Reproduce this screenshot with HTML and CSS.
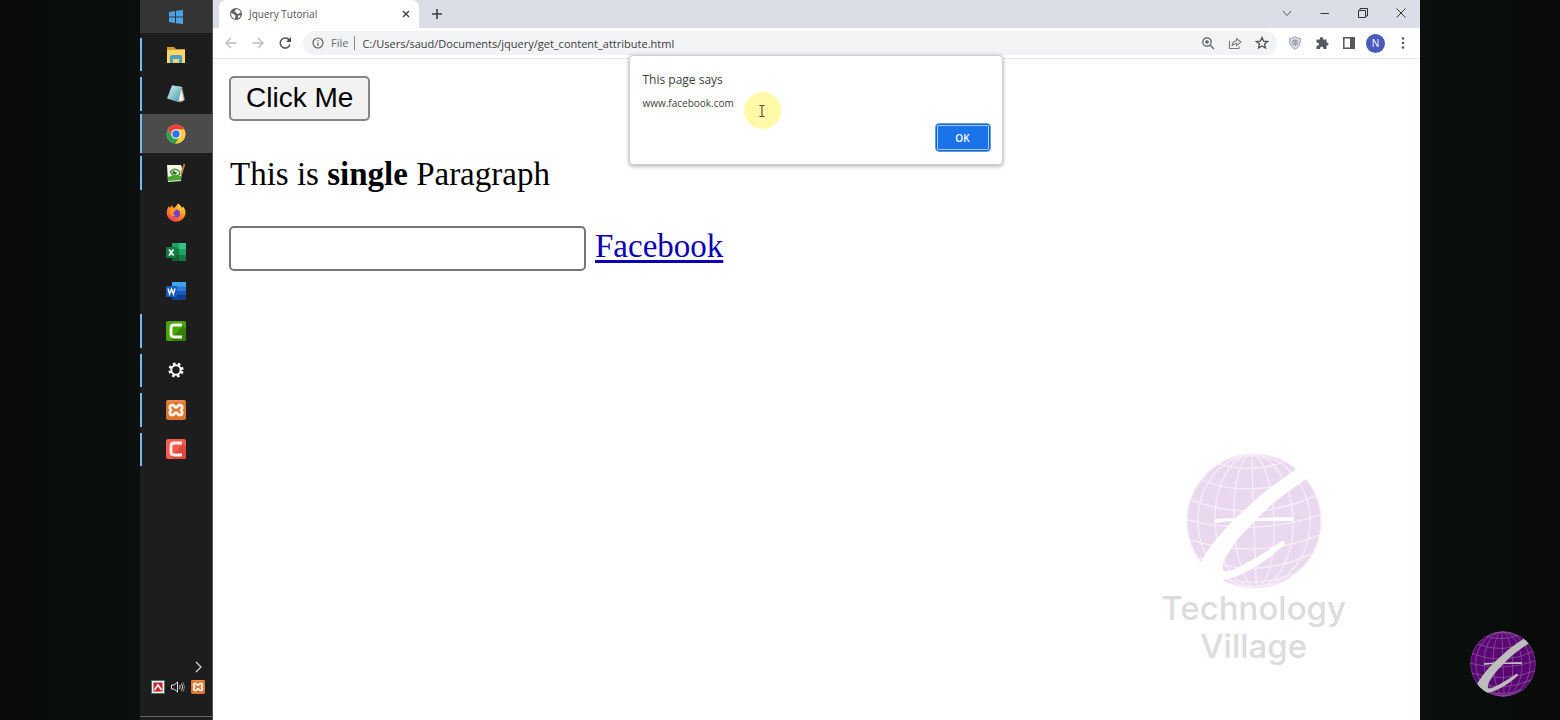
FILE: index.html
```html
<!DOCTYPE html>
<html lang="en">
<head>
<meta charset="utf-8">
<title>Jquery Tutorial</title>
<link rel="stylesheet" href="styles.css">
</head>
<body>
<svg class="defs" aria-hidden="true">
  <defs>
    <clipPath id="disc"><circle cx="68" cy="68" r="67.500"/></clipPath>
    <linearGradient id="pane" x1="0" y1="0" x2="1" y2="1"><stop offset="0" stop-color="#d9f1f5"/><stop offset="1" stop-color="#3e97a8"/></linearGradient>
    <linearGradient id="fox" x1="0.8" y1="0" x2="0.2" y2="1"><stop offset="0" stop-color="#ffe04a"/><stop offset="0.5" stop-color="#ff8a1f"/><stop offset="1" stop-color="#f5305e"/></linearGradient>
    <symbol id="globe" viewBox="0 0 136 136">
      <g clip-path="url(#disc)">
        <circle class="globe-fill" cx="68" cy="68" r="67.500"/>
        <g class="globe-lines" fill="none">
          <circle cx="68" cy="68" r="67"/>
          <g transform="rotate(-2 68 68)">
            <path d="M68 1V135"/>
            <ellipse cx="68" cy="68" rx="20" ry="66"/>
            <ellipse cx="68" cy="68" rx="39" ry="66"/>
            <ellipse cx="68" cy="68" rx="56" ry="66"/>
            <path d="M34 9Q68 22 102 9M16 25Q68 47 120 25M4 44Q68 72 132 44M0 64Q68 84 136 64M2 84Q68 108 134 84M12 103Q68 127 124 103M28 122Q68 136 108 122"/>
          </g>
        </g>
        <path class="globe-mark" d="M112 15C96 26 78 38 65 51C50 64 36 78 25 93C20 100 16 106 13 113L20 136L37 127C50 125 65 117 80 107Q91 99 99 91Q99 88 96 88C86 95 70 105 57 112C48 117 42 119 38 118C35 114 38 106 43 99C49 89 55 82 63 74C72 64 80 56 90 48C100 40 110 33 122 25Z"/>
        <path class="globe-mark" d="M30 66C40 65 55 65 70 65L106 64Q109 66 106 68L70 68Q45 67 30 70Q27 68 30 66Z"/>
      </g>
    </symbol>
    <symbol id="xampp" viewBox="0 0 20 20">
      <rect width="20" height="20" rx="2" fill="#dd7431"/><path d="M1 1H19" stroke="#f2a46c"/>
      <path d="M6.500 5C3.500 5 3 7.500 5 10C3 12.500 3.500 15 6.500 15C8.500 15 8.500 12.500 10 12.500S11.500 15 13.500 15C16.500 15 17 12.500 15 10C17 7.500 16.500 5 13.500 5C11.500 5 11.500 7.500 10 7.500S8.500 5 6.500 5Z" fill="none" stroke="#fff1e2" stroke-width="2.800"/>
    </symbol>
  </defs>
</svg>

<div class="stage">
  <nav class="taskbar" aria-label="Taskbar">
    <button class="start" aria-label="Start">
      <svg class="i16" viewBox="0 0 16 16"><path fill="#4aa3e8" d="M1 3L7 2V7.500H1ZM8 1.800L15 1V7.500H8ZM1 8.500H7V14L1 13ZM8 8.500H15V15L8 14.200Z"/></svg>
    </button>
    <div class="apps">
      <button class="app open" aria-label="File Explorer"><svg class="i20" viewBox="0 0 20 20"><path fill="#d99a2b" d="M1 2H8L10 4H19V8H1Z"/><path fill="#fbd769" d="M1 5H19V18H1Z"/><path fill="#4b9ec4" d="M4 18V12Q4 10 6 10H14Q16 10 16 12V18H13V14H7V18Z"/></svg></button>
      <button class="app open" aria-label="Notepad"><svg class="i20" viewBox="0 0 20 20"><path fill="#8b7f6c" d="M16 2L19 16L14 19Z"/><path fill="#f0eee7" d="M15 3L18 16L12 18Z"/><path fill="url(#pane)" d="M6 1.500L16 3L12 18L1 14.500Z"/><path d="M6 2L16 3.500" stroke="#c3d4d6"/></svg></button>
      <button class="app open active" aria-label="Chrome"><svg class="i20" viewBox="0 0 20 20"><circle cx="10" cy="10" r="9.500" fill="#ffcd40"/><path fill="#e94335" d="M1.800 5.200A9.500 9.500 0 0 1 18.200 5.200L18.300 5.500H10L6 12.300Z"/><path fill="#31a350" d="M1.800 5.200L6 12.300L10 14.500H14L9.200 19.500A9.500 9.500 0 0 1 1.800 5.200Z"/><path fill="#ffcd40" d="M18.200 5.500A9.500 9.500 0 0 1 9.500 19.500L14 12.500L12.500 5.500Z"/><circle cx="10" cy="10" r="4.800" fill="#fff"/><circle cx="10" cy="10" r="3.700" fill="#2f74e8"/></svg></button>
      <button class="app open" aria-label="Notepad++"><svg class="i20" viewBox="0 0 20 20"><path fill="#f3f6ec" d="M1 2L15 2L16 5L15 18L2 19Z"/><path fill="#48a52e" d="M2 14Q8 11 15 13L15 17L2 18Z"/><path d="M4 9Q8 4 13 8Q15 13 10 12.500Q6 12.500 5 10H11" fill="none" stroke="#4f9f36" stroke-width="1.600"/><path d="M7 8L10 11" stroke="#22472a" stroke-width="1.500"/><path d="M18.500 1L15 12" stroke="#bd8734" stroke-width="1.800"/></svg></button>
      <button class="app" aria-label="Firefox"><svg class="i20" viewBox="0 0 20 20"><path fill="url(#fox)" d="M12 0.500Q15 2 16 5L17 3.500Q20 7 19.500 11A9.600 9.600 0 0 1 .5 10Q.5 6 3 3L4 5L6 2Q6 4 8 5Q10 4 12 .5Z"/><circle cx="10" cy="10.500" r="4" fill="#7541c9"/><path fill="#ff9b28" d="M4 7Q7 5 10 7.500L7.500 9Q7 12 10 13Q5 14 4 10Z"/><path fill="#ffbb2d" d="M12 3Q17 6 15.500 11Q15 7 11 6Z"/></svg></button>
      <button class="app" aria-label="Excel"><svg class="i20" viewBox="0 0 20 20"><path fill="#21a366" d="M6 1H20V19H6Z"/><path fill="#33c481" d="M13 1H20V7H13Z"/><path fill="#107c41" d="M6 7H13V13H6ZM13 13H20V19H13Z"/><path fill="#185c37" d="M6 13H13V19H6Z"/><rect y="5" width="11" height="11" rx="1" fill="#107c41"/><path d="M3 7.500L7.500 13.500M7.500 7.500L3 13.500" stroke="#fff" stroke-width="1.700"/></svg></button>
      <button class="app" aria-label="Word"><svg class="i20" viewBox="0 0 20 20"><path fill="#41a5ee" d="M6 1H20V6H6Z"/><path fill="#2b7cd3" d="M6 5.500H20V10H6Z"/><path fill="#185abd" d="M6 10H20V14.500H6Z"/><path fill="#103f91" d="M6 14.500H20V19H6Z"/><rect y="5" width="11" height="11" rx="1" fill="#185abd"/><path d="M2 7.500L3.600 13L5.500 8L7.400 13L9 7.500" fill="none" stroke="#fff" stroke-width="1.400"/></svg></button>
      <button class="app open" aria-label="Camtasia"><svg class="i20" viewBox="0 0 20 20"><rect width="20" height="20" rx="2" fill="#4ba407"/><path fill="#367f05" d="M5 18L17 5L20 8V18Q20 20 18 20H7Z"/><path d="M16 4H8Q5 4 5 7V13Q5 16 8 16H16" fill="none" stroke="#f2faea" stroke-width="2.800"/></svg></button>
      <button class="app open" aria-label="Settings"><svg class="i20" viewBox="0 0 20 20" fill="none" stroke="#fff"><circle cx="10" cy="10" r="4.700" stroke-width="2"/><circle cx="10" cy="10" r="6.300" stroke-width="2.600" stroke-dasharray="2.475 2.475" transform="rotate(11 10 10)"/></svg></button>
      <button class="app open" aria-label="XAMPP"><svg class="i20"><use href="#xampp"/></svg></button>
      <button class="app open" aria-label="Camtasia Recorder"><svg class="i20" viewBox="0 0 20 20"><rect width="20" height="20" rx="2" fill="#f65a50"/><path fill="#dc473f" d="M5 18L17 5L20 8V18Q20 20 18 20H7Z"/><path d="M16 4H8Q5 4 5 7V13Q5 16 8 16H16" fill="none" stroke="#fff0ec" stroke-width="2.800"/></svg></button>
    </div>
    <div class="tray">
      <button class="tray-more" aria-label="Show hidden icons"><svg class="i14" viewBox="0 0 14 14" fill="none" stroke="#ddd" stroke-width="1.200"><path d="M5 2L10 7L5 12"/></svg></button>
      <div class="tray-row">
        <button aria-label="Antivirus"><svg class="i14" viewBox="0 0 14 14"><rect x=".5" y=".5" width="13" height="13" fill="#eee" stroke="#41785d"/><rect x="2.500" y="2.500" width="9" height="9" fill="#c7212c"/><path d="M3.500 10L7 5L10.500 10" fill="none" stroke="#fff" stroke-width="1.600"/></svg></button>
        <button aria-label="Volume"><svg class="i14" viewBox="0 0 14 14" fill="none" stroke="#ddd"><path d="M.5 5H3L6.500 2V12L3 9H.5Z"/><path d="M8.500 5Q10 7 8.500 9M10.500 3.500Q13 7 10.500 10.500"/><path d="M12 2Q15 7 12 12" stroke="#777"/></svg></button>
        <button aria-label="XAMPP control"><svg class="i14"><use href="#xampp"/></svg></button>
      </div>
    </div>
  </nav>

  <div class="browser">
    <header class="tabstrip">
      <div class="tab">
        <svg class="i12" viewBox="0 0 12 12"><circle cx="6" cy="6" r="6" fill="#5f6368"/><path fill="#fff" d="M1 5Q3 5 4 6.500Q6 7 5.500 8.500Q4.500 9 5 11Q1 10 1 5ZM6 1Q9.500 1 10.800 4.500Q9 4.500 8.500 6Q6 6 6.500 4.500Q4 4 5 2.500Q6 2.500 6 1ZM8 8Q9 7 10.500 7.500Q10 9.500 8 10.500Z"/></svg>
        <span class="tab-title">Jquery Tutorial</span>
        <button aria-label="Close tab"><svg class="i10" viewBox="0 0 10 10" stroke="#3c4043" stroke-width="1.400"><path d="M2 2L8 8M8 2L2 8"/></svg></button>
      </div>
      <button class="new-tab" aria-label="New tab"><svg class="i12" viewBox="0 0 12 12" stroke="#3c4043" stroke-width="1.600"><path d="M1 6H11M6 1V11"/></svg></button>
      <div class="window-buttons">
        <button aria-label="Search tabs"><svg class="i12" viewBox="0 0 12 12" fill="none" stroke="#555"><path d="M2 4L6 8.500L10 4"/></svg></button>
        <button aria-label="Minimize"><svg class="i12" viewBox="0 0 12 12" stroke="#333"><path d="M1.500 6.500H10"/></svg></button>
        <button aria-label="Restore"><svg class="i12" viewBox="0 0 12 12" fill="none" stroke="#333"><path d="M1.500 3.500H8.500V10.500H1.500ZM3 3V1.500H10.500V9H9"/></svg></button>
        <button aria-label="Close"><svg class="i12" viewBox="0 0 12 12" stroke="#333"><path d="M1.500 1.500L10.500 10.500M10.500 1.500L1.500 10.500"/></svg></button>
      </div>
    </header>

    <div class="toolbar">
      <div class="tools">
        <button aria-label="Back"><svg class="i14" viewBox="0 0 14 14" fill="none" stroke="#babcbe" stroke-width="1.300"><path d="M12.500 7H2M7 2L2 7L7 12"/></svg></button>
        <button aria-label="Forward"><svg class="i14" viewBox="0 0 14 14" fill="none" stroke="#babcbe" stroke-width="1.300"><path d="M1.500 7H12M7 2L12 7L7 12"/></svg></button>
        <button aria-label="Reload"><svg class="i14" viewBox="0 0 14 14"><path d="M11.500 4.500A5 5 0 1 0 12 8.500" fill="none" stroke="#4d5155" stroke-width="1.500"/><path fill="#4d5155" d="M13 1V6H8Z"/></svg></button>
      </div>
      <div class="omnibox">
        <svg class="i12" viewBox="0 0 12 12" fill="none" stroke="#5f6368" stroke-width="1.200"><circle cx="6" cy="6" r="5"/><path d="M6 5.500V9M6 3V4.300"/></svg>
        <span class="scheme">File</span>
        <input class="url" aria-label="Address" value="C:/Users/saud/Documents/jquery/get_content_attribute.html">
        <div class="tools">
          <button aria-label="Zoom"><svg class="i14" viewBox="0 0 14 14" fill="none" stroke="#5f6368" stroke-width="1.300"><circle cx="6" cy="6" r="4.200"/><path d="M9 9L13 13M4 6H8M6 4V8"/></svg></button>
          <button aria-label="Share"><svg class="i14" viewBox="0 0 14 14" fill="none" stroke="#777b80" stroke-width="1.100"><path d="M1.500 5V12.500H11V10.500M4 10Q4.500 5 8.500 5V2.500L13 6L8.500 9.500V7.500Q5.500 7.500 4 10Z"/></svg></button>
          <button aria-label="Bookmark"><svg class="i14" viewBox="0 0 14 14" fill="none" stroke="#4d5155" stroke-width="1.300"><path d="M7 1.500L8.600 5.200L12.600 5.500L9.500 8.100L10.500 12L7 9.900L3.500 12L4.500 8.100L1.400 5.500L5.400 5.200Z"/></svg></button>
        </div>
      </div>
      <div class="tools">
        <button aria-label="Shield extension"><svg class="i14" viewBox="0 0 14 14"><path d="M7 .8Q10 2.500 12.500 2.500Q13 10 7 13.500Q1 10 1.500 2.500Q4 2.500 7 .8Z" fill="#d9dbe2" stroke="#a3a6af"/><circle cx="7" cy="6.500" r="2.600" fill="#c3c6d1" stroke="#9498a5"/><path d="M7 4V9" stroke="#858998"/></svg></button>
        <button aria-label="Extensions"><svg class="i14" viewBox="0 0 14 14"><path fill="#55585c" d="M1.500 3.500H5Q4.500 1 6.500 1T8 3.500H11.500V6.500Q13.500 6 13.500 8T11.500 9.500V13H8.500Q8.500 10.500 6.700 10.500T5 13H1.500V10Q4 10 4 8.200T1.500 6.500Z"/></svg></button>
        <button aria-label="Side panel"><svg class="i14" viewBox="0 0 14 14"><path d="M1.800 1.800H12.200V12.200H1.800Z" fill="none" stroke="#55585c" stroke-width="1.500"/><path fill="#55585c" d="M8 1.500H12.500V12.500H8Z"/></svg></button>
        <button aria-label="Profile"><span class="avatar">N</span></button>
        <button aria-label="Menu"><svg class="i14" viewBox="0 0 14 14" fill="#4d5155"><circle cx="7" cy="2.500" r="1.200"/><circle cx="7" cy="7" r="1.200"/><circle cx="7" cy="11.500" r="1.200"/></svg></button>
      </div>
    </div>

    <main class="page">
      <button class="click-me">Click Me</button>
      <p>This is <b>single</b> Paragraph</p>
      <div class="field-row">
        <input class="field" type="text" aria-label="Text">
        <a href="#">Facebook</a>
      </div>
      <aside class="watermark">
        <svg class="watermark-globe" aria-hidden="true"><use href="#globe"/></svg>
        <div>Technology<br>Village</div>
      </aside>
    </main>

    <div class="dialog" role="dialog" aria-labelledby="dialog-title">
      <h1 id="dialog-title">This page says</h1>
      <div class="message">www.facebook.com</div>
      <button class="ok">OK</button>
      <div class="pointer">
        <svg class="i14" viewBox="0 0 14 14" fill="none" stroke="#333"><path d="M4.500 1.500H6.500L7 2L7.500 1.500H9.500M7 2V12M4.500 12.500H6.500L7 12L7.500 12.500H9.500"/></svg>
      </div>
    </div>
  </div>
  <svg class="badge" role="img" aria-label="Technology Village"><use href="#globe"/></svg>
</div>
</body>
</html>
```
FILE: styles.css
```css
* { box-sizing: border-box; }
body {
  margin: 0;
  background: #080b0a;
  font-family: "Open Sans", "Noto Sans", sans-serif;
  font-size: 11px;
  color: #3c4043;
}
button { margin: 0; padding: 0; border: 0; background: none; font: inherit; color: inherit; }
svg { display: block; flex: none; }
.defs { position: absolute; width: 0; height: 0; }
.i10 { width: 10px; height: 10px; }
.i12 { width: 12px; height: 12px; }
.i14 { width: 14px; height: 14px; }
.i16 { width: 16px; height: 16px; }
.i20 { width: 20px; height: 20px; }

.stage {
  position: relative;
  display: grid;
  grid-template-columns: 73px 1fr;
  min-height: 100vh;
  padding: 0 140px;
  background: linear-gradient(90deg, #080b0a, #0b0f0d 9%, #0b0f0d 91%, #080b0a);
}

/* Taskbar */
.taskbar {
  display: flex;
  flex-direction: column;
  background: #1d1d1d;
  border-right: 1px solid #555;
}
.taskbar button { display: flex; align-items: center; justify-content: center; }
.start { height: 33px; margin-bottom: 2px; }
.taskbar .start { background: #343434; }
.apps { display: grid; grid-auto-rows: 1fr; height: 434px; }
.taskbar .app { border-left: 2px solid transparent; padding-right: 2px; }
.taskbar .open { border-image: linear-gradient(transparent 10%, #76b9ed 10%, #76b9ed 90%, transparent 90%) 1; border-width: 0 0 0 2px; }
.taskbar .active { background: #4b4b4b; border-image: none; border-color: #76b9ed; }
.tray { margin-top: auto; padding-bottom: 3px; }
.tray .tray-more { margin: 0 7px 6px auto; }
.tray-row {
  display: flex;
  justify-content: space-between;
  padding: 0 7px 22px 11px;
  border-bottom: 1px solid #666;
}

/* Browser window */
.browser { position: relative; display: flex; flex-direction: column; min-width: 0; background: #fff; }
.tabstrip { display: flex; height: 28px; padding-left: 6px; background: #dbdee6; }
.tab {
  display: flex;
  align-items: center;
  gap: 7px;
  width: 200px;
  padding: 0 8px 0 11px;
  background: #fff;
  border-radius: 7px 7px 0 0;
}
.tab-title { flex: 1; font-size: 10px; color: #505357; }
.new-tab { padding: 0 12px; }
.window-buttons { display: flex; margin-left: auto; }
.window-buttons button { display: grid; place-items: center; width: 38px; height: 26px; }
.toolbar {
  display: flex;
  align-items: center;
  gap: 4px;
  height: 31px;
  padding: 0 4px;
  border-bottom: 1px solid #e6e7e9;
}
.tools { display: flex; }
.tools button { display: grid; place-items: center; width: 27px; height: 24px; }
.omnibox {
  display: flex;
  flex: 1;
  align-items: center;
  height: 24px;
  margin-left: 1px;
  padding: 0 2px 0 9px;
  border-radius: 12px;
  background: #f1f3f4;
}
.scheme { margin-left: 7px; padding-right: 6px; line-height: 14px; border-right: 1px solid #85888c; color: #6b6f73; }
.url { flex: 1; min-width: 0; padding: 0 0 0 7px; border: 0; outline: 0; background: none; font: inherit; color: #3c4043; }
.avatar {
  display: grid;
  place-items: center;
  width: 19px;
  height: 19px;
  border-radius: 50%;
  background: #4a5bbb;
  color: #fff;
  font-size: 10px;
}

/* Page content */
.page {
  position: relative;
  flex: 1;
  padding: 17px 16px;
  font-family: "Liberation Serif", "Times New Roman", serif;
  font-size: 33px;
  line-height: 38px;
  color: #000;
}
.page .click-me {
  display: block;
  height: 45px;
  padding: 0 15px 2px;
  border: 2px solid #858585;
  border-radius: 5px;
  background: #f2f2f2;
  font-family: "Liberation Sans", Arial, sans-serif;
  font-size: 28px;
}
.page p { margin: 34px 0 33px 1px; }
.field-row { display: flex; gap: 9px; line-height: 41px; }
.field { width: 357px; height: 45px; padding: 4px; border: 2px solid #767676; border-radius: 5px; font: inherit; }
.page a { color: #0a00b4; text-decoration-thickness: 3px; text-underline-offset: 3px; }
.watermark {
  position: absolute;
  right: 74px;
  bottom: 55px;
  display: flex;
  flex-direction: column;
  align-items: center;
  color: #dcdcdc;
  font: 500 33px/38px Inter, sans-serif;
  text-align: center;
}
.watermark-globe { width: 136px; height: 136px; }
.globe-fill { fill: var(--globe, #ead8ef); }
.globe-lines { stroke: var(--globe-line, #f6ebf9); stroke-width: 1.5px; }
.globe-mark { fill: var(--globe-mark, #fff); }

/* Alert */
.dialog {
  position: absolute;
  top: 55px;
  left: 50%;
  width: 374px;
  margin-left: -188px;
  padding: 15px 12px 13px 13px;
  border: 1px solid #cfcfcf;
  border-radius: 4px;
  background: #fff;
  box-shadow: 0 1px 4px rgba(0, 0, 0, .35);
  display: flex;
  flex-direction: column;
}
.dialog h1 { margin: 0 0 8px; font-size: 12px; line-height: 17px; font-weight: 400; }
.message { font-size: 10px; line-height: 15px; }
.dialog .ok {
  align-self: flex-end;
  width: 54px;
  height: 27px;
  margin-top: 13px;
  border-radius: 3px;
  background: #1a73e8;
  box-shadow: inset 0 0 0 1px #1763c6, inset 0 0 0 2px #a9cdfa;
  outline: 1px solid #5c9cec;
  color: #fff;
  font-size: 10px;
  font-weight: 600;
}
.pointer {
  position: absolute;
  top: 36px;
  left: 114px;
  display: grid;
  place-items: center;
  width: 37px;
  height: 37px;
  border-radius: 50%;
  background: #fffaa8;
}

/* Channel badge */
.badge {
  --globe: #5a0673;
  --globe-line: #8d5a9b;
  --globe-mark: #bdbdbd;
  position: absolute;
  right: 24px;
  bottom: 23px;
  width: 66px;
  height: 66px;
}
```
